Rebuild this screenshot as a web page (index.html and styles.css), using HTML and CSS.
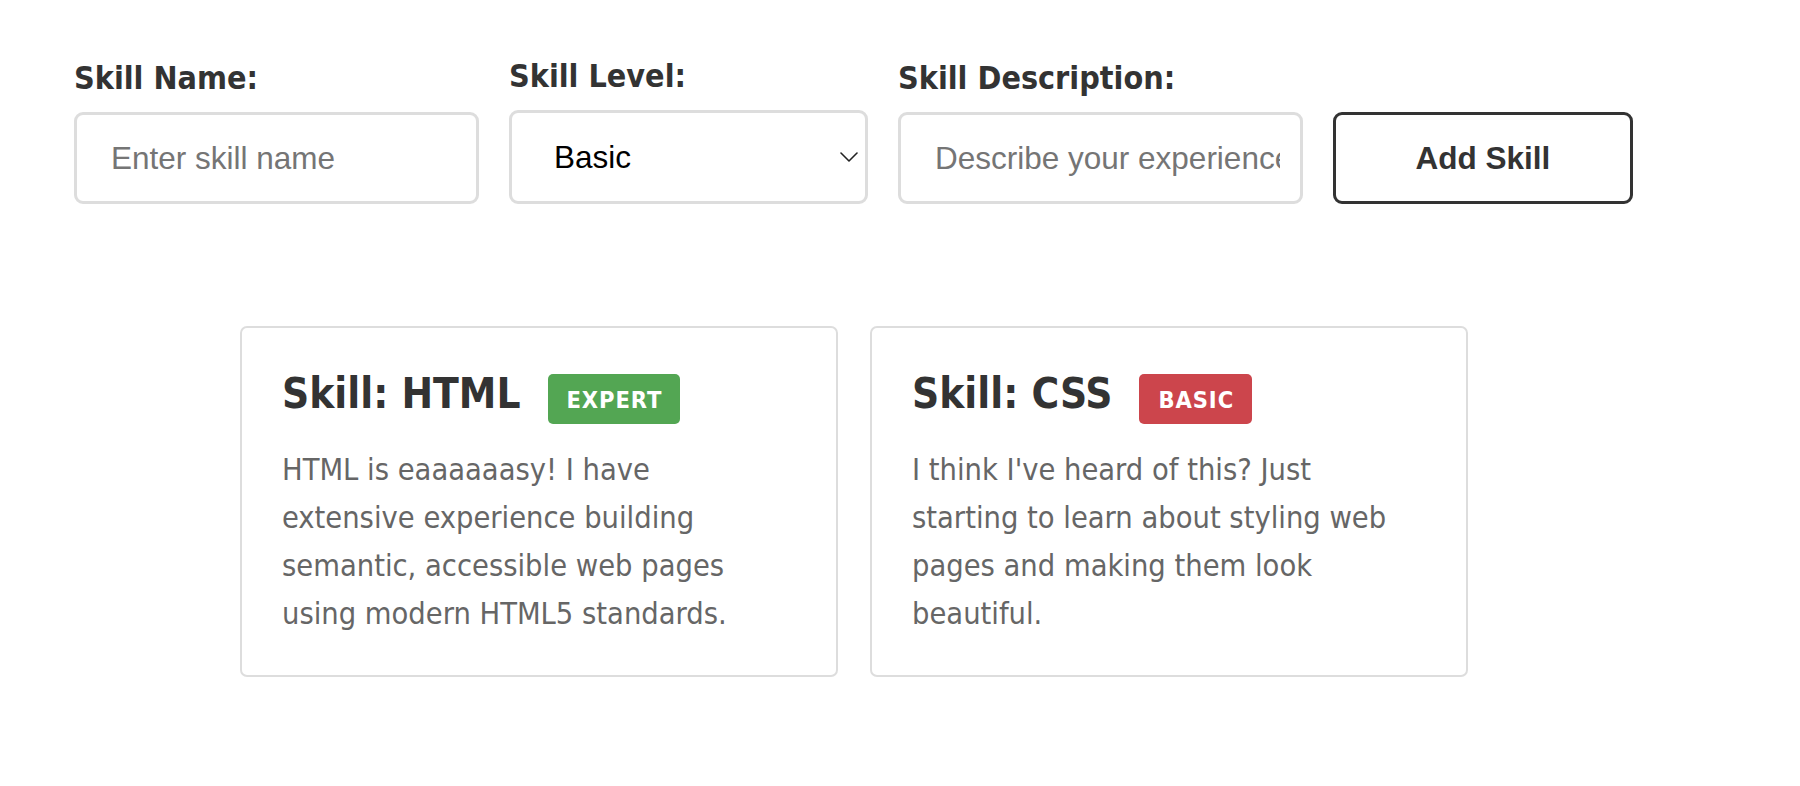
FILE: index.html
```html
<!DOCTYPE html>
<html lang="en">
<head>
<meta charset="utf-8">
<title>Skills</title>
<link rel="stylesheet" href="styles.css">
</head>
<body>
<div class="page">
  <form class="skill-form">
    <div class="field field-name">
      <label class="field-label" for="skill-name">Skill Name:</label>
      <input class="text-input" id="skill-name" type="text" placeholder="Enter skill name">
    </div>
    <div class="field field-level">
      <label class="field-label" for="skill-level">Skill Level:</label>
      <div class="select-wrap">
        <select class="select-input" id="skill-level">
          <option>Basic</option>
          <option>Intermediate</option>
          <option>Expert</option>
        </select>
        <svg class="chevron" width="18" height="10" viewBox="0 0 18 10" aria-hidden="true"><path d="M1 1 L9 9 L17 1" fill="none" stroke="#222" stroke-width="1.6" stroke-linecap="round" stroke-linejoin="round"/></svg>
      </div>
    </div>
    <div class="field field-desc">
      <label class="field-label" for="skill-desc">Skill Description:</label>
      <input class="text-input" id="skill-desc" type="text" placeholder="Describe your experience">
    </div>
    <button class="add-btn" type="button">Add Skill</button>
  </form>

  <div class="cards">
    <div class="card">
      <div class="card-head">
        <h2 class="card-title">Skill: HTML</h2>
        <span class="badge badge-expert">EXPERT</span>
      </div>
      <p class="card-text">HTML is eaaaaaasy! I have extensive experience building semantic, accessible web pages using modern HTML5 standards.</p>
    </div>
    <div class="card">
      <div class="card-head">
        <h2 class="card-title">Skill: CSS</h2>
        <span class="badge badge-basic">BASIC</span>
      </div>
      <p class="card-text">I think I've heard of this? Just starting to learn about styling web pages and making them look beautiful.</p>
    </div>
  </div>
</div>
</body>
</html>
```

FILE: styles.css
```css
html, body {
  margin: 0;
  padding: 0;
  background: #ffffff;
}

body {
  font-family: "DejaVu Sans Condensed", "DejaVu Sans", sans-serif;
  color: #333333;
}

.page {
  width: 1560px;
  padding: 58px 0 0 74px;
}

.skill-form {
  display: flex;
  align-items: flex-end;
  gap: 30px;
}

.field {
  display: flex;
  flex-direction: column;
}

.field-label {
  display: block;
  font-family: "DejaVu Sans Condensed", "DejaVu Sans", sans-serif;
  font-weight: bold;
  font-size: 32px;
  line-height: 36px;
  color: #333333;
  margin-bottom: 16px;
}

.text-input {
  box-sizing: border-box;
  width: 405px;
  height: 92px;
  border: 3.5px solid #dddddd;
  border-radius: 9px;
  padding: 0 20px 0 34px;
  font-family: "Liberation Sans", Arial, sans-serif;
  font-size: 31.5px;
  color: #111111;
  background: #ffffff;
  outline: none;
}

.text-input::placeholder {
  color: #757575;
}

.select-wrap {
  position: relative;
  width: 359px;
}

.select-input {
  box-sizing: border-box;
  width: 359px;
  height: 94px;
  border: 3.5px solid #dddddd;
  border-radius: 9px;
  padding: 0 40px 0 42px;
  font-family: "Liberation Sans", Arial, sans-serif;
  font-size: 31.5px;
  color: #000000;
  background: #ffffff;
  appearance: none;
  -webkit-appearance: none;
  outline: none;
}

.chevron {
  position: absolute;
  right: 10px;
  top: 42px;
  pointer-events: none;
}

.add-btn {
  box-sizing: border-box;
  width: 300px;
  height: 92px;
  border: 3.5px solid #333333;
  border-radius: 9px;
  background: #ffffff;
  font-family: "Liberation Sans", Arial, sans-serif;
  font-weight: bold;
  font-size: 31.5px;
  color: #333333;
  cursor: pointer;
}

.cards {
  display: flex;
  justify-content: center;
  gap: 32px;
  margin-top: 122px;
}

.card {
  box-sizing: border-box;
  width: 598px;
  height: 351px;
  border: 2px solid #dddddd;
  border-radius: 7px;
  padding: 41px 54px 0 40px;
}

.card-head {
  display: flex;
  align-items: baseline;
  gap: 27px;
}

.card-title {
  margin: 0;
  font-family: "DejaVu Sans Condensed", "DejaVu Sans", sans-serif;
  font-weight: bold;
  font-size: 42px;
  line-height: 50px;
  color: #333333;
}

.badge {
  display: inline-block;
  font-family: "DejaVu Sans Condensed", "DejaVu Sans", sans-serif;
  font-weight: bold;
  font-size: 23.5px;
  line-height: 27px;
  letter-spacing: 0.9px;
  padding: 13.5px 18px 9.5px 19px;
  border-radius: 5px;
  color: #ffffff;
}

.badge-expert {
  background: #53a653;
}

.badge-basic {
  background: #cc454c;
}

.card-text {
  margin: 22px 0 0 0;
  font-family: "DejaVu Sans Condensed", "DejaVu Sans", sans-serif;
  font-size: 30.5px;
  line-height: 48px;
  color: #666666;
}
```
